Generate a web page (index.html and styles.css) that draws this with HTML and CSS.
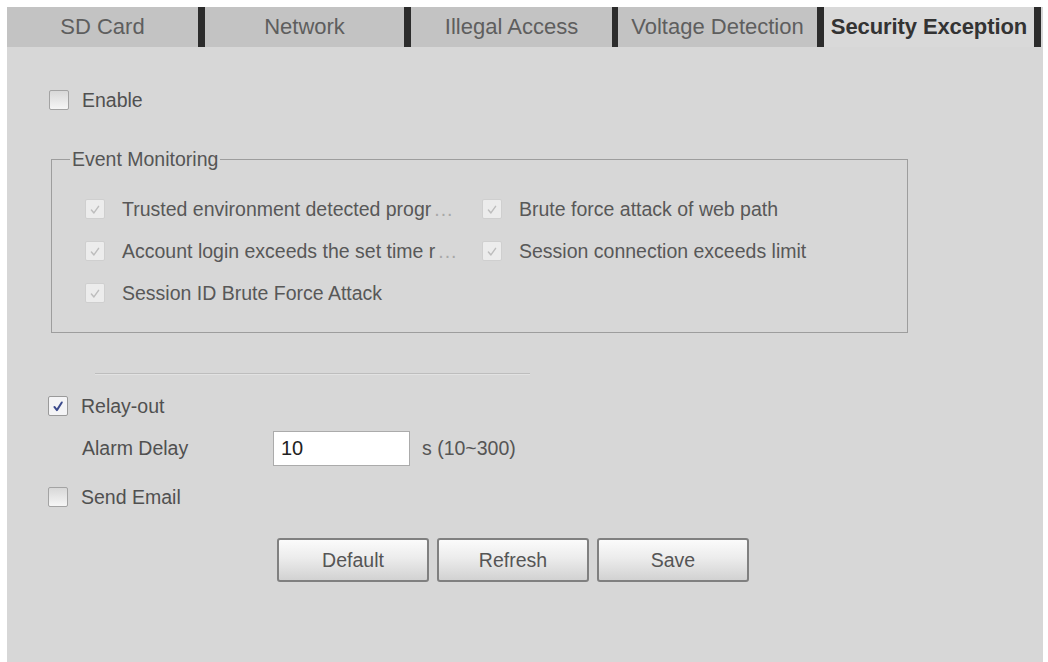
FILE: index.html
```html
<!DOCTYPE html>
<html lang="en">
<head>
<meta charset="utf-8">
<title>Security Exception</title>
<link rel="stylesheet" href="styles.css">
</head>
<body>
<div class="panel">
  <nav class="tabs">
    <div class="tab">SD Card</div>
    <div class="tab sep">Network</div>
    <div class="tab sep">Illegal Access</div>
    <div class="tab sep">Voltage Detection</div>
    <div class="tab sep active">Security Exception</div>
  </nav>

  <div class="content">
    <label class="row check-row">
      <span class="cb"></span>
      <span class="lbl">Enable</span>
    </label>

    <fieldset class="monitor">
      <legend>Event Monitoring</legend>
      <div class="events">
        <div class="event">
          <span class="cb disabled"><svg viewBox="0 0 20 20"><path d="M6 10.5 L8.8 13.8 L14 6.5"/></svg></span>
          <span class="elbl">Trusted environment detected progr<span class="dots">...</span></span>
        </div>
        <div class="event">
          <span class="cb disabled"><svg viewBox="0 0 20 20"><path d="M6 10.5 L8.8 13.8 L14 6.5"/></svg></span>
          <span class="elbl">Brute force attack of web path</span>
        </div>
        <div class="event">
          <span class="cb disabled"><svg viewBox="0 0 20 20"><path d="M6 10.5 L8.8 13.8 L14 6.5"/></svg></span>
          <span class="elbl">Account login exceeds the set time r<span class="dots">...</span></span>
        </div>
        <div class="event">
          <span class="cb disabled"><svg viewBox="0 0 20 20"><path d="M6 10.5 L8.8 13.8 L14 6.5"/></svg></span>
          <span class="elbl">Session connection exceeds limit</span>
        </div>
        <div class="event">
          <span class="cb disabled"><svg viewBox="0 0 20 20"><path d="M6 10.5 L8.8 13.8 L14 6.5"/></svg></span>
          <span class="elbl">Session ID Brute Force Attack</span>
        </div>
      </div>
    </fieldset>

    <div class="divider"></div>

    <label class="row check-row relay">
      <span class="cb checked"><svg viewBox="0 0 20 20"><path d="M6 10.5 L8.8 14 L14.2 5.5"/></svg></span>
      <span class="lbl">Relay-out</span>
    </label>

    <div class="row delay-row">
      <span class="field-label">Alarm Delay</span>
      <input class="num" type="text" value="10">
      <span class="unit">s (10~300)</span>
    </div>

    <label class="row check-row email">
      <span class="cb"></span>
      <span class="lbl">Send Email</span>
    </label>

    <div class="buttons">
      <button class="btn">Default</button>
      <button class="btn">Refresh</button>
      <button class="btn">Save</button>
    </div>
  </div>
</div>
</body>
</html>
```
FILE: styles.css
```css
html, body {
  margin: 0;
  padding: 0;
  background: #ffffff;
  overflow: hidden;
}

body {
  font-family: "Liberation Sans", Arial, sans-serif;
  color: #505050;
}

.panel {
  margin: 7px 0 0 7px;
  width: 1036px;
  height: 655px;
  background: #d7d7d7;
}

.tabs {
  display: grid;
  grid-template-columns: 191px 206px 208px 205px 224px;
  height: 40px;
}

.tab {
  display: flex;
  align-items: center;
  justify-content: center;
  background: #c3c3c3;
  color: #5e5e5e;
  font-size: 22px;
  white-space: nowrap;
}

.tab.sep {
  border-left: 7px solid #2c2c2c;
}

.tab:nth-child(4) {
  border-left-width: 6px;
}

.tab.active {
  background: #d9d9d9;
  color: #333333;
  font-weight: bold;
  border-right: 7px solid #2c2c2c;
  letter-spacing: -0.1px;
}

.content {
  padding-left: 41px;
  font-size: 19.5px;
}

.row {
  display: flex;
  align-items: center;
}

.check-row {
  height: 30px;
  gap: 13px;
}

.check-row:first-child {
  margin-top: 38px;
  margin-left: 1px;
}

.cb {
  width: 20px;
  height: 20px;
  flex: none;
  box-sizing: border-box;
  border: 1px solid #a3a3a3;
  border-radius: 2px;
  background: linear-gradient(#d8d8d8, #f6f6f6);
  display: flex;
  align-items: center;
  justify-content: center;
}

.cb svg {
  width: 19px;
  height: 19px;
  fill: none;
  stroke-width: 1.6;
  stroke-linecap: round;
  stroke-linejoin: round;
}

.cb.disabled {
  border-color: #cfcfcf;
  background: #ececec;
}

.cb.disabled svg {
  stroke: #bdbdbd;
}

.cb.checked {
  background: #f4f4f6;
  border-color: #9a9a9a;
}

.cb.checked svg {
  stroke: #3b4a8c;
  stroke-width: 2.2;
}

.monitor {
  margin: 33px 0 0 3px;
  width: 857px;
  box-sizing: border-box;
  border: 1px solid #9d9d9d;
  padding: 18px 0 18px 18px;
}

.monitor legend {
  padding: 0 2px;
  line-height: 22px;
  color: #555555;
}

.events {
  display: grid;
  grid-template-columns: 397px 1fr;
  grid-auto-rows: 42px;
  padding-left: 15px;
}

.event {
  display: flex;
  align-items: center;
  gap: 17px;
  min-width: 0;
}

.elbl {
  color: #585858;
  white-space: nowrap;
}

.dots {
  color: #a8a8a8;
  margin-left: 3px;
  letter-spacing: 1px;
}

.divider {
  margin: 40px 0 0 47px;
  width: 435px;
  height: 1px;
  background: #bdbdbd;
  border-bottom: 1px solid #e2e2e2;
}

.relay {
  margin-top: 16px;
}

.delay-row {
  margin-top: 10px;
  height: 35px;
  padding-left: 34px;
}

.field-label {
  width: 191px;
  flex: none;
}

.num {
  width: 137px;
  height: 35px;
  box-sizing: border-box;
  border: 1px solid #ababab;
  background: #ffffff;
  font-family: "Liberation Sans", Arial, sans-serif;
  font-size: 20px;
  color: #222222;
  padding: 0 7px;
  margin: 0;
  outline: none;
}

.unit {
  margin-left: 12px;
  color: #555555;
}

.email {
  margin-top: 16px;
}

.buttons {
  display: flex;
  gap: 8px;
  margin: 26px 0 0 229px;
}

.btn {
  width: 152px;
  height: 44px;
  box-sizing: border-box;
  border: 2px solid #808080;
  border-radius: 3px;
  background: linear-gradient(#fbfbfb, #ececec 45%, #d2d2d2);
  font-family: "Liberation Sans", Arial, sans-serif;
  font-size: 19.5px;
  color: #555555;
  padding: 0;
}
```
